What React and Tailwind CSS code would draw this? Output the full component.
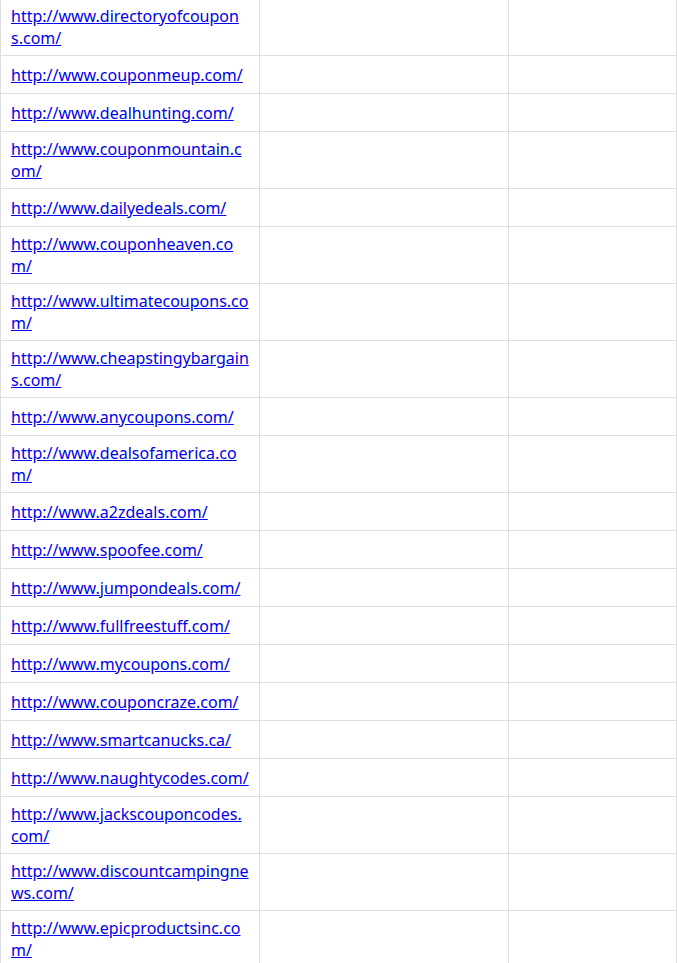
import React from "react";

const rows = [
  ["http://www.directoryofcoupon", "s.com/"],
  ["http://www.couponmeup.com/"],
  ["http://www.dealhunting.com/"],
  ["http://www.couponmountain.c", "om/"],
  ["http://www.dailyedeals.com/"],
  ["http://www.couponheaven.co", "m/"],
  ["http://www.ultimatecoupons.co", "m/"],
  ["http://www.cheapstingybargain", "s.com/"],
  ["http://www.anycoupons.com/"],
  ["http://www.dealsofamerica.co", "m/"],
  ["http://www.a2zdeals.com/"],
  ["http://www.spoofee.com/"],
  ["http://www.jumpondeals.com/"],
  ["http://www.fullfreestuff.com/"],
  ["http://www.mycoupons.com/"],
  ["http://www.couponcraze.com/"],
  ["http://www.smartcanucks.ca/"],
  ["http://www.naughtycodes.com/"],
  ["http://www.jackscouponcodes.", "com/"],
  ["http://www.discountcampingne", "ws.com/"],
  ["http://www.epicproductsinc.co", "m/"],
];

export default function App() {
  return (
    <div className="h-[963px] w-[677px] overflow-hidden bg-white">
      <div
        className="-mt-[1px] w-[677px] border-l border-[#dddddd] text-[16px] leading-[22px]"
        style={{ fontFamily: '"Noto Sans", "Open Sans", sans-serif' }}
      >
        {rows.map((lines, i) => (
          <div key={i} className="flex border-b border-[#dddddd]">
            <div className="flex min-h-[37px] w-[259px] shrink-0 items-center border-r border-[#dddddd] px-[10px] py-[6px]">
              <a
                href="#"
                className="whitespace-nowrap text-[#0000ee] underline"
              >
                {lines.map((l, j) => (
                  <React.Fragment key={j}>
                    {j > 0 && <br />}
                    {l}
                  </React.Fragment>
                ))}
              </a>
            </div>
            <div className="w-[249px] shrink-0 border-r border-[#dddddd]" />
            <div className="w-[168px] shrink-0 border-r border-[#dddddd]" />
          </div>
        ))}
      </div>
    </div>
  );
}
